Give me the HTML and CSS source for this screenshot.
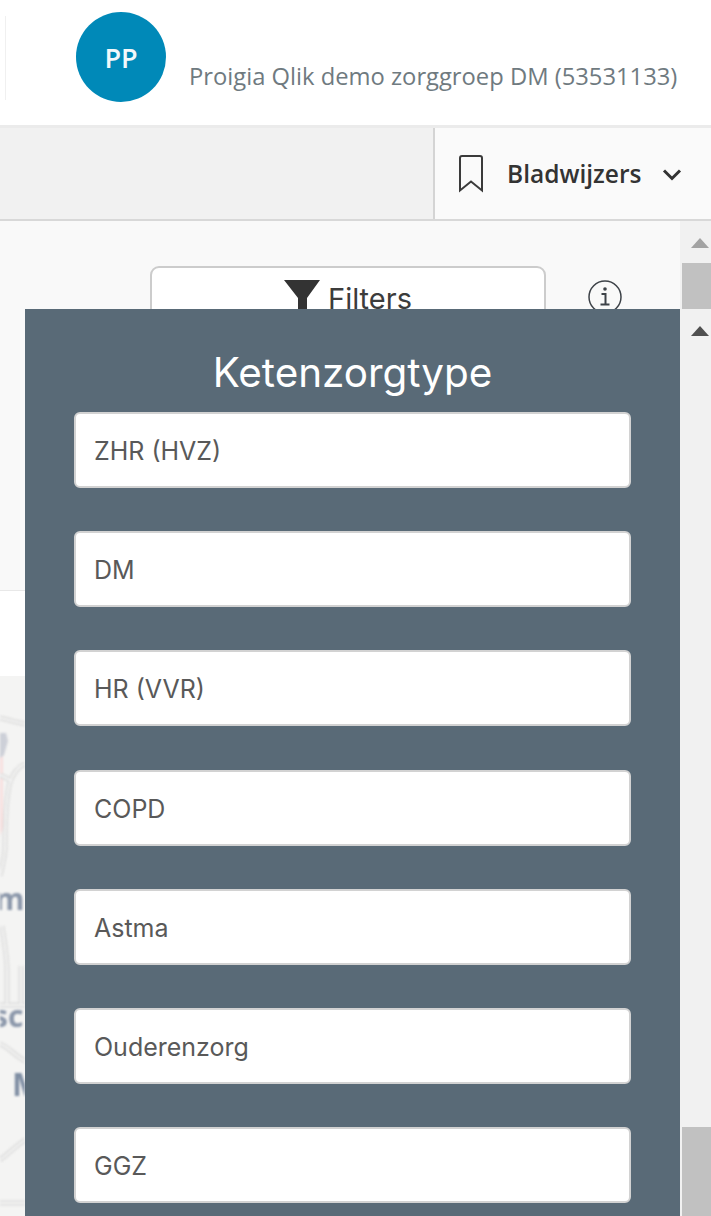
FILE: index.html
```html
<!DOCTYPE html>
<html lang="en">
<head>
    <meta charset="UTF-8">
    <title>Ketenzorgtype</title>
    <link rel="stylesheet" href="styles.css">
</head>
<body>
<div class="page">
    <header class="top">
        <div class="sep"></div>
        <div class="avatar">PP</div>
        <div class="org">Proigia Qlik demo zorggroep DM (53531133)</div>
    </header>
    <div class="toolbar">
        <div class="tool-left"></div>
        <div class="bookmarks">
            <svg class="bm-icon" width="26" height="38" viewBox="0 0 26 38">
                <path d="M2 3a2 2 0 0 1 2-2h18a2 2 0 0 1 2 2V35.500l-11-9-11 9z" fill="none" stroke="#3a3a3a" stroke-width="2"/>
            </svg>
            <span class="bm-text">Bladwijzers</span>
            <svg class="chev" width="20" height="14" viewBox="0 0 20 14">
                <path d="M2 2.500L10 10.500l8-8" fill="none" stroke="#333" stroke-width="3"/>
            </svg>
        </div>
    </div>
    <div class="body">
        <div class="content">
            <div class="filter-band">
                <div class="filter-btn">
                    <svg width="36" height="44" viewBox="0 0 36 44"><path d="M0 0h36L23 18v26h-9V18z" fill="#333"/></svg>
                    <span>Filters</span>
                </div>
                <svg class="info" width="34" height="34" viewBox="0 0 34 34">
                    <circle cx="17" cy="17" r="16" fill="none" stroke="#3d4248" stroke-width="1.500"/>
                    <circle cx="17" cy="9" r="1.800" fill="#3d4248"/>
                    <path d="M13.500 14h4v10M12.500 24.500h9" fill="none" stroke="#3d4248" stroke-width="2"/>
                </svg>
            </div>
            <div class="white-band"></div>
            <div class="map">
                <svg width="25" height="540" viewBox="0 0 25 540">
                    <path d="M0 57h6l2 8-4 14-4 4z" fill="#cdd0d8"/>
                    <path d="M0 82l3-2v72l-3 8z" fill="#f8e0df"/>
                    <g fill="none" stroke="#dcdcdc" stroke-width="5">
                        <path d="M0 42c8 2 16 4 25 6"/>
                        <path d="M25 88c-8 3-12 10-15 18-4 14-5 40-5 68-1 10-3 18-5 26"/>
                        <path d="M0 99c4 2 8 4 12 6"/>
                        <path d="M2 250c2 15 5 30 5 45v33"/>
                        <path d="M21 290v38"/>
                        <path d="M0 329h25"/>
                        <path d="M0 368c10 4 15 12 25 17"/>
                        <path d="M0 484c10-8 16-14 25-20"/>
                        <path d="M0 527h25"/>
                    </g>
                    <g fill="none" stroke="#f4f4f3" stroke-width="2">
                        <path d="M0 42c8 2 16 4 25 6"/>
                        <path d="M25 88c-8 3-12 10-15 18-4 14-5 40-5 68-1 10-3 18-5 26"/>
                        <path d="M0 99c4 2 8 4 12 6"/>
                        <path d="M2 250c2 15 5 30 5 45v33"/>
                        <path d="M21 290v38"/>
                        <path d="M0 329h25"/>
                        <path d="M0 368c10 4 15 12 25 17"/>
                        <path d="M0 484c10-8 16-14 25-20"/>
                        <path d="M0 527h25"/>
                    </g>
                    <text class="map-label" x="-5" y="234">m</text>
                    <text class="map-label" x="-7" y="351">sc</text>
                    <text class="map-label big" x="12" y="420">M</text>
                </svg>
            </div>
        </div>
        <div class="scrollbar outer">
            <div class="arrow gray"></div>
            <div class="thumb"></div>
        </div>
    </div>
</div>

<div class="modal">
    <div class="panel">
        <h2 class="panel-title">Ketenzorgtype</h2>
        <div class="items">
            <div class="item">ZHR (HVZ)</div>
            <div class="item">DM</div>
            <div class="item">HR (VVR)</div>
            <div class="item">COPD</div>
            <div class="item">Astma</div>
            <div class="item">Ouderenzorg</div>
            <div class="item">GGZ</div>
        </div>
    </div>
    <div class="scrollbar inner">
        <div class="arrow dark"></div>
        <div class="thumb"></div>
    </div>
</div>
</body>
</html>
```
FILE: styles.css
```css
html, body {
    margin: 0;
    height: 100%;
    overflow: hidden;
    background: #fff;
    font-family: "Open Sans", "Liberation Sans", sans-serif;
}
.page {
    height: 1216px;
    display: flex;
    flex-direction: column;
}

/* top bar */
.top {
    height: 128px;
    flex: none;
    display: flex;
    align-items: flex-start;
    box-sizing: border-box;
    padding: 12px 0 0 5px;
    border-bottom: 3px solid #ebebeb;
}
.sep {
    width: 1px;
    height: 84px;
    margin-top: 4px;
    background: #f0f0f0;
}
.avatar {
    width: 90px;
    height: 90px;
    margin-left: 70px;
    border-radius: 50%;
    background: #0089b8;
    color: #f2f8fb;
    font-size: 27px;
    font-weight: 600;
    display: flex;
    align-items: center;
    justify-content: center;
}
.org {
    margin: 49px 0 0 23px;
    font-size: 23.750px;
    line-height: 30px;
    color: #6f7a80;
    white-space: nowrap;
}

/* toolbar */
.toolbar {
    height: 93px;
    flex: none;
    display: flex;
    box-sizing: border-box;
    border-bottom: 2px solid #d8d8d8;
}
.tool-left {
    width: 433px;
    background: #f1f1f1;
}
.bookmarks {
    flex: 1;
    box-sizing: border-box;
    border-left: 2px solid #d4d4d4;
    background: #fafafa;
    display: flex;
    align-items: center;
    padding-left: 23px;
}
.bm-text {
    margin-left: 23px;
    font-size: 24.500px;
    font-weight: 600;
    color: #333;
}
.chev {
    margin: 3px 0 0 21px;
}

/* page content below */
.body {
    flex: 1;
    display: flex;
    min-height: 0;
}
.content {
    flex: 1;
    display: flex;
    flex-direction: column;
}
.filter-band {
    height: 370px;
    box-sizing: border-box;
    background: #f9f9f9;
    border-bottom: 1px solid #e8e8e8;
    display: flex;
    align-items: flex-start;
    padding: 45px 0 0 150px;
}
.filter-btn {
    width: 396px;
    height: 80px;
    box-sizing: border-box;
    border: 2px solid #ccc;
    border-radius: 9px;
    background: #fff;
    display: flex;
    justify-content: center;
    gap: 8px;
    padding-top: 12px;
    font-family: Inter, "Liberation Sans", sans-serif;
    font-size: 29px;
    line-height: 38px;
    color: #3c3c3c;
}
.info {
    margin: 14px 0 0 42px;
}
.white-band {
    height: 85px;
}
.map {
    flex: 1;
    background: #f4f4f3;
}
.map svg {
    display: block;
    filter: blur(0.9px);
}
.map-label {
    font-family: "Open Sans", sans-serif;
    font-size: 30px;
    font-weight: 700;
    fill: #8b97aa;
}
.map-label.big {
    font-size: 32px;
    fill: #7f8ea3;
}

/* scrollbars */
.scrollbar {
    width: 31px;
    flex: none;
    background: #f1f1f1;
    display: flex;
    flex-direction: column;
    align-items: flex-end;
}
.arrow {
    width: 0;
    height: 0;
    margin-right: 2px;
    border-left: 9px solid transparent;
    border-right: 9px solid transparent;
}
.arrow.gray {
    margin-top: 17px;
    margin-bottom: 15px;
    border-bottom: 10px solid #a3a3a3;
}
.arrow.dark {
    margin-top: 17px;
    border-bottom: 10px solid #505050;
}
.thumb {
    width: 29px;
    background: #c1c1c1;
}
.outer .thumb {
    height: 46px;
}
.inner .thumb {
    height: 89px;
    margin-top: auto;
}

/* overlay */
.modal {
    position: absolute;
    left: 25px;
    top: 309px;
    right: 0;
    bottom: 0;
    display: flex;
    overflow: hidden;
}
.panel {
    flex: 1;
    background: #596a77;
    padding: 0 49px;
    overflow: hidden;
}
.panel-title {
    margin: 37px 0 11.800px;
    font-family: Inter, "Liberation Sans", sans-serif;
    font-size: 40.400px;
    font-weight: 400;
    line-height: 54px;
    text-align: center;
    color: #fff;
}
.items {
    display: flex;
    flex-direction: column;
    gap: 43.250px;
}
.item {
    height: 76px;
    flex: none;
    box-sizing: border-box;
    border: 2px solid #d2d2d2;
    border-radius: 6px;
    background: #fff;
    padding: 2px 18px 0;
    display: flex;
    align-items: center;
    font-family: Inter, "Liberation Sans", sans-serif;
    font-size: 25px;
    color: #595959;
}
```
